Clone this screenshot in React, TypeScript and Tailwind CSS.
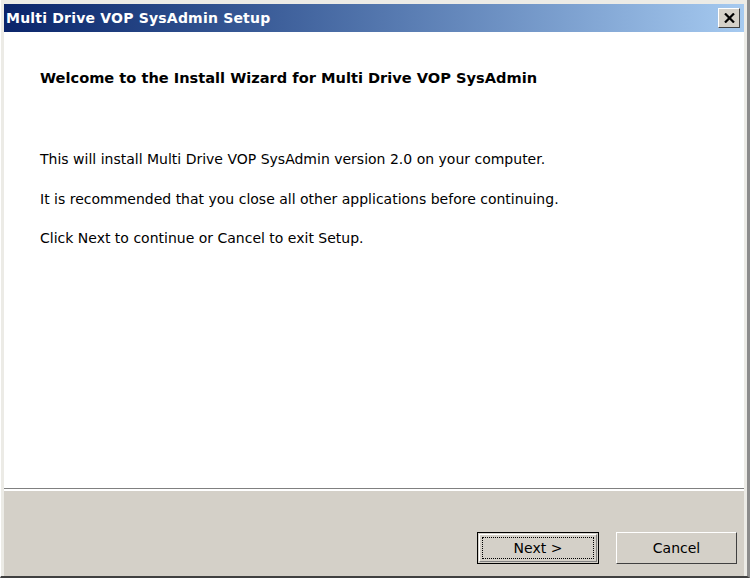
export default function App() {
  const lines = [
    'This will install Multi Drive VOP SysAdmin version 2.0 on your computer.',
    'It is recommended that you close all other applications before continuing.',
    'Click Next to continue or Cancel to exit Setup.',
  ]

  return (
    <div className="w-[750px] h-[578px] flex flex-col bg-[#ecebe6] pt-[4px] pl-[3px] pr-[3px] border-l border-l-[#ffffff] border-r-[3px] border-r-[#8c8c8c] border-b-2 border-b-[#404040] font-['DejaVu_Sans',sans-serif]">
      <div className="h-[28px] flex items-center justify-between pl-[2px] pr-[4px] bg-gradient-to-r from-[#0a246a] to-[#a6caf0]">
        <span className="text-white font-bold text-[14px] tracking-[0.2px]">Multi Drive VOP SysAdmin Setup</span>
        <button className="w-[22px] h-[20px] flex items-center justify-center bg-[#d4d0c8] border border-t-white border-l-white border-r-[#404040] border-b-[#404040]">
          <svg width="11" height="10" viewBox="0 0 11 10">
            <path d="M1 0.5 L10 9.5 M10 0.5 L1 9.5" stroke="#000" strokeWidth="2.2" />
          </svg>
        </button>
      </div>

      <div className="flex-1 bg-white pl-[36px] pt-[36px] flex flex-col text-black">
        <h1 className="font-bold text-[14.6px] leading-[20px] mb-[61px]">
          Welcome to the Install Wizard for Multi Drive VOP SysAdmin
        </h1>
        <div className="flex flex-col gap-[19.5px] text-[14px] leading-[20px]">
          {lines.map(line => (
            <p key={line}>{line}</p>
          ))}
        </div>
      </div>

      <div className="border-t border-t-[#808080] border-b-2 border-b-white" />

      <div className="h-[85px] bg-[#d4d0c8] flex items-start justify-end gap-[17px] pt-[41px] pr-[7px] text-[14px] text-black">
        <button className="w-[122px] h-[32px] border border-black bg-[#d4d0c8] p-[1px]">
          <div className="w-full h-full border border-t-white border-l-white border-r-[#808080] border-b-[#808080] p-[2px]">
            <div className="w-full h-full border border-dotted border-black flex items-center justify-center">
              Next &gt;
            </div>
          </div>
        </button>
        <button className="w-[121px] h-[32px] border border-t-white border-l-white border-r-[#404040] border-b-[#404040] bg-[#d4d0c8] flex items-center justify-center">
          Cancel
        </button>
      </div>
    </div>
  )
}
